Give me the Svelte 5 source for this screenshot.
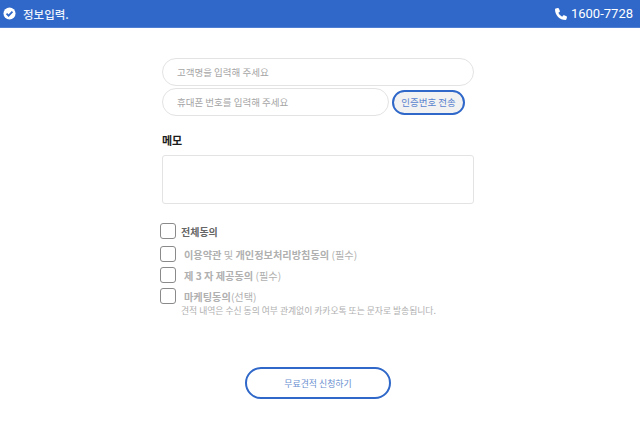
<script>
  const agreements = [
    { id: 'all', strong: '전체동의', rest: '', top: true },
    { id: 'terms', strong: '이용약관', mid: ' 및 ', strong2: '개인정보처리방침동의', rest: ' (필수)' },
    { id: 'third', strong: '제 3 자 제공동의', rest: ' (필수)' },
    { id: 'mkt', strong: '마케팅동의', rest: '(선택)' }
  ];
</script>

<header class="topbar">
  <div class="title">
    <svg class="check" viewBox="0 0 14 14" width="13" height="13">
      <circle cx="7" cy="7" r="6.5" fill="#fff" />
      <path d="M3.8 7.2 6 9.4 10.2 5" fill="none" stroke="#2f68c9" stroke-width="1.9" />
    </svg>
    <span>정보입력.</span>
  </div>
  <div class="phone">
    <svg viewBox="0 0 512 512" width="12" height="12">
      <path fill="#fff" d="M164.900 24.600c-7.700-18.600-28-28.500-47.400-23.200l-88 24C12.100 30.200 0 46 0 64C0 311.400 200.600 512 448 512c18 0 33.800-12.100 38.600-29.500l24-88c5.300-19.400-4.600-39.700-23.200-47.400l-96-40c-16.300-6.800-35.200-2.100-46.300 11.600L304.700 368C234.300 334.700 177.300 277.700 144 207.300L193.300 167c13.700-11.200 18.400-30 11.600-46.300l-40-96z" />
    </svg>
    <span>1600-7728</span>
  </div>
</header>

<main class="form">
  <input class="field" placeholder="고객명을 입력해 주세요" />
  <div class="phone-row">
    <input class="field" placeholder="휴대폰 번호를 입력해 주세요" />
    <button class="send">인증번호 전송</button>
  </div>

  <h3 class="memo-label">메모</h3>
  <textarea class="memo"></textarea>

  <ul class="agree">
    {#each agreements as a}
      <li class:top={a.top}>
        <span class="box"></span>
        <span class="label">
          <b>{a.strong}</b>{a.mid ?? ''}{#if a.strong2}<b>{a.strong2}</b>{/if}{a.rest}
        </span>
      </li>
    {/each}
  </ul>
  <p class="note">견적 내역은 수신 동의 여부 관계없이 카카오톡 또는 문자로 발송됩니다.</p>

  <button class="submit">무료견적 신청하기</button>
</main>

<style>
  :global(body) {
    margin: 0;
    background: #fff;
    font-family: "Noto Sans CJK KR", "Noto Sans", sans-serif;
  }

  .topbar {
    height: 27px;
    background: #2f68c9;
    border-bottom: 1px solid #4d7fd3;
    box-sizing: content-box;
    display: flex;
    align-items: center;
    justify-content: space-between;
    padding: 0 7px 0 3px;
    color: #fff;
  }

  .title {
    display: flex;
    align-items: center;
    gap: 7px;
    font-size: 11.5px;
    font-weight: 500;
    color: #eef3fb;
  }

  .phone {
    display: flex;
    align-items: center;
    gap: 4px;
    font-family: Roboto, "Liberation Sans", sans-serif;
    font-size: 13px;
  }

  .form {
    width: 312px;
    margin-left: 162px;
    padding-top: 30px;
    display: flex;
    flex-direction: column;
  }

  .field {
    box-sizing: border-box;
    width: 100%;
    height: 28px;
    border: 1px solid #e3e3e3;
    border-radius: 14px;
    padding: 0 14px;
    font-family: inherit;
    font-size: 9.5px;
    outline: none;
  }

  .field::placeholder {
    color: #a5a5a5;
  }

  .phone-row {
    display: flex;
    align-items: center;
    gap: 3px;
    margin-top: 2px;
  }

  .phone-row .field {
    width: 227px;
    flex-shrink: 0;
  }

  .send {
    box-sizing: border-box;
    width: 73px;
    height: 25px;
    border: 2px solid #2f68c9;
    border-radius: 13px;
    background: #f2f2f2;
    color: #5a84cf;
    font-family: inherit;
    font-size: 9.5px;
    padding: 0;
  }

  .memo-label {
    margin: 16px 0 0;
    height: 17px;
    line-height: 17px;
    font-size: 11px;
    font-weight: 700;
    color: #1c1c1c;
  }

  .memo {
    box-sizing: border-box;
    display: block;
    width: 100%;
    height: 49px;
    margin-top: 6px;
    border: 1px solid #e3e3e3;
    border-radius: 3px;
    resize: none;
    outline: none;
  }

  .agree {
    list-style: none;
    margin: 19px 0 0 -2px;
    padding: 0;
    display: flex;
    flex-direction: column;
    gap: 5px;
  }

  .agree li {
    display: flex;
    align-items: center;
    height: 16px;
    font-size: 10.2px;
    color: #b0b0b0;
  }

  .agree li.top {
    margin-bottom: 2px;
    color: #666;
    font-size: 10px;
  }

  .box {
    box-sizing: border-box;
    width: 16px;
    height: 16px;
    flex-shrink: 0;
    border: 1px solid #8a8a8a;
    border-radius: 3px;
    background: #fff;
    margin-right: 8px;
  }

  .agree li.top .box {
    margin-right: 5px;
  }

  .agree b {
    font-weight: 700;
  }

  .note {
    margin: 1px 0 0 19px;
    font-size: 8.8px;
    line-height: 12px;
    color: #b0b0b0;
  }

  .submit {
    box-sizing: border-box;
    align-self: center;
    width: 146px;
    height: 32px;
    margin-top: 50px;
    border: 2px solid #2f68c9;
    border-radius: 16px;
    background: #fff;
    color: #6a8fd0;
    font-family: inherit;
    font-size: 8.9px;
    padding: 0;
  }
</style>
